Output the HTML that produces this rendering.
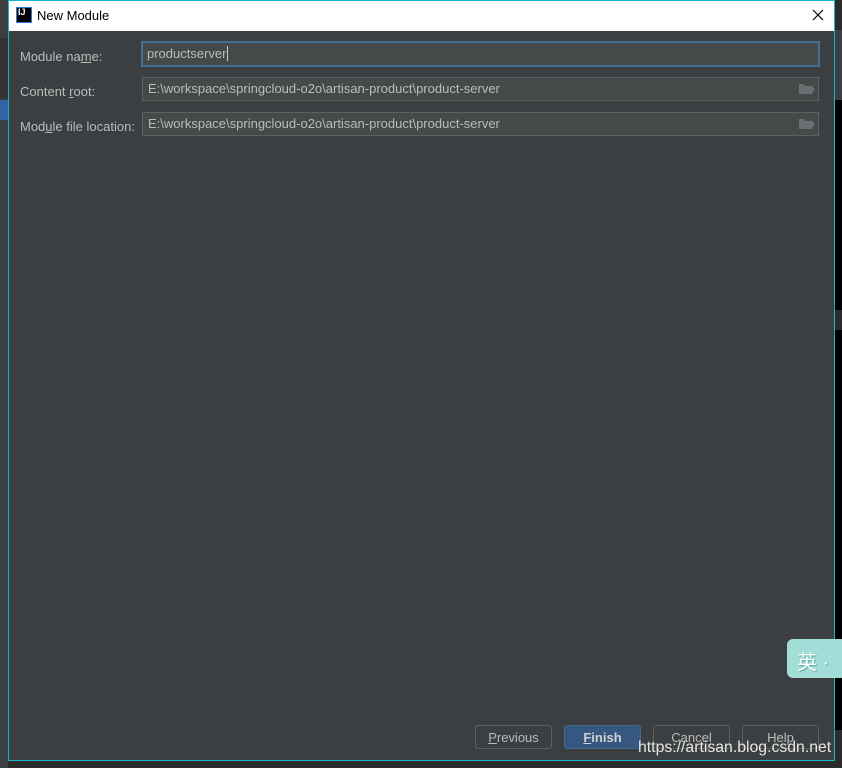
<!DOCTYPE html>
<html><head><meta charset="utf-8"><style>
*{margin:0;padding:0;box-sizing:border-box}
body{width:842px;height:768px;overflow:hidden;background:#2b2b2b;position:relative;font-family:"Liberation Sans","Noto Sans CJK SC",sans-serif;font-size:13px}
.abs{position:absolute}
.lbl{color:#bbbbbb;font-size:13px}
.fld{position:absolute;background:#45494a;border:1px solid #5e6060;color:#bbbbbb;font-size:13px;padding:4px 5px;white-space:nowrap;line-height:14px}
.btn{position:absolute;top:725px;width:77px;height:24px;border:1px solid #5e6060;border-radius:3px;background:#3c3f41;color:#bbbbbb;text-align:center;line-height:24px;font-size:13px}
</style></head><body>
<div class="abs" style="left:0;top:0;width:8px;height:768px;background:#3c3f41"></div>
<div class="abs" style="left:0;top:38px;width:8px;height:60px;background:#313335"></div>
<div class="abs" style="left:0;top:100px;width:8px;height:20px;background:#2f65a4"></div>
<div class="abs" style="left:835px;top:30px;width:7px;height:70px;background:#3c3f41"></div>
<div class="abs" style="left:835px;top:100px;width:7px;height:210px;background:#000"></div>
<div class="abs" style="left:835px;top:330px;width:7px;height:400px;background:#000"></div>
<div class="abs" style="left:8px;top:0;width:827px;height:761px;border:1px solid #19b5c7;background:#3c3f41"></div>
<div class="abs" style="left:9px;top:1px;width:825px;height:30px;background:#fff"></div>
<div class="abs" style="left:16px;top:7px;width:16px;height:16px;background:#000;border:1px solid #2a7ad0"></div>
<div class="abs" style="left:18px;top:7px;color:#fff;font-size:9px;font-weight:bold">IJ</div>
<div class="abs" style="left:37px;top:8px;color:#000;font-size:13px">New Module</div>
<svg class="abs" style="left:812px;top:9px" width="12" height="12"><path d="M1 1L11 11M11 1L1 11" stroke="#000" stroke-width="1.2"/></svg>
<div class="abs lbl" style="left:20px;top:49px">Module na<u>m</u>e:</div>
<div class="abs lbl" style="left:20px;top:84px">Content <u>r</u>oot:</div>
<div class="abs lbl" style="left:20px;top:119px">Mod<u>u</u>le file location:</div>
<div class="fld" style="left:141px;top:41px;width:679px;height:26px;border:2px solid #466d94;padding:4px 4px;">productserver<span style="border-left:1px solid #ccc;margin-left:1px"></span></div>
<div class="fld" style="left:142px;top:77px;width:677px;height:24px">E:\workspace\springcloud-o2o\artisan-product\product-server</div>
<div class="fld" style="left:142px;top:112px;width:677px;height:24px">E:\workspace\springcloud-o2o\artisan-product\product-server</div>
<svg class="abs" style="left:799px;top:83px" width="16" height="12"><path d="M0 1h5l1 2h8v2H3L0 11z M3 5h13l-3 6H0z" fill="#6b6e70"/></svg>
<svg class="abs" style="left:799px;top:118px" width="16" height="12"><path d="M0 1h5l1 2h8v2H3L0 11z M3 5h13l-3 6H0z" fill="#6b6e70"/></svg>
<div class="btn" style="left:475px"><u>P</u>revious</div>
<div class="btn" style="left:564px;background:#365880;border-color:#43688e;color:#d0d0d0;font-weight:bold"><u>F</u>inish</div>
<div class="btn" style="left:653px">Cancel</div>
<div class="btn" style="left:742px">Help</div>
<div class="abs" style="left:638px;top:739px;color:#e6e6e6;font-size:15.8px">https://artisan.blog.csdn.net</div>
<div class="abs" style="left:787px;top:639px;width:60px;height:39px;background:#a3ddd7;border-radius:6px;color:#fff;font-size:20px;padding:7px 0 0 10px;text-shadow:1px 1px 1px #5a9">英 ·</div>
</body></html>
